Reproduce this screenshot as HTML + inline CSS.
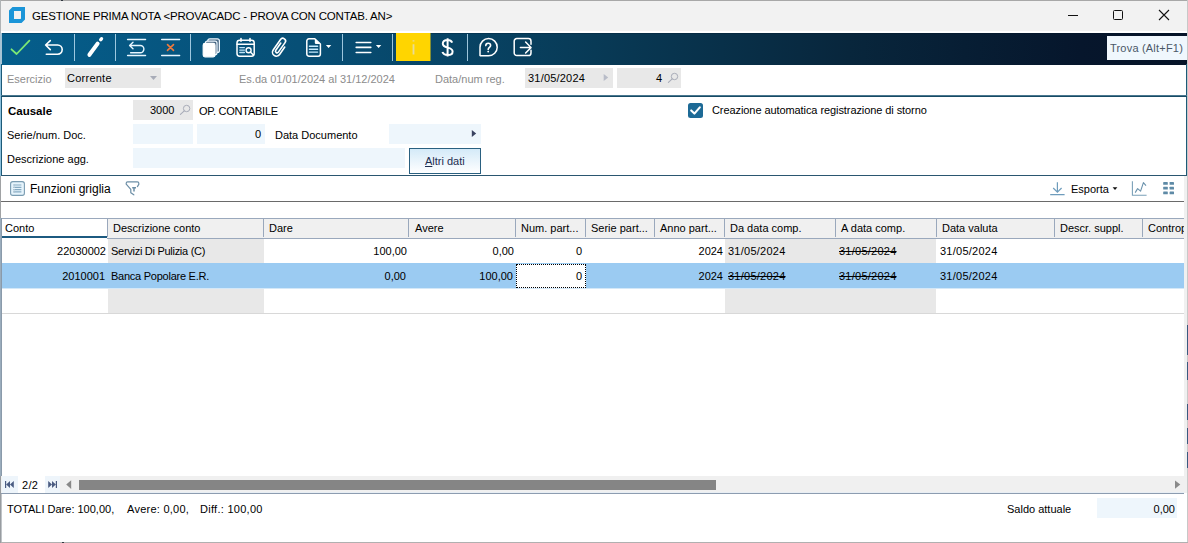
<!DOCTYPE html>
<html><head><meta charset="utf-8">
<style>
*{margin:0;padding:0;box-sizing:border-box}
html,body{width:1188px;height:543px;overflow:hidden;background:#fff}
body{position:relative;font-family:"Liberation Sans",sans-serif;font-size:11px;color:#000}
.a{position:absolute}
.t{position:absolute;white-space:nowrap;line-height:13px}
.r{text-align:right}
svg{position:absolute;overflow:visible;z-index:2}
</style></head><body>

<!-- window frame -->
<div class="a" style="left:0;top:0;width:1188px;height:543px;background:#fff"></div>
<!-- title bar -->
<div class="a" style="left:0;top:0;width:1188px;height:31px;background:#f2f2f2"></div>
<div class="a" style="left:0;top:0;width:1188px;height:1px;background:#a8a8a8"></div>
<div class="a" style="left:0;top:0;width:1px;height:543px;background:#b0b4b6"></div>
<div class="a" style="left:0;top:176px;width:1px;height:42px;background:#a0a2a4"></div>
<div class="a" style="z-index:3;left:0;top:218px;width:1px;height:258px;background:#9aacbc"></div>
<div class="a" style="z-index:3;left:1px;top:218px;width:1px;height:258px;background:#8a9aaa"></div>
<div class="a" style="z-index:3;left:0;top:476px;width:1px;height:67px;background:#989ca0"></div>
<div class="a" style="z-index:3;left:1px;top:494px;width:1px;height:48px;background:#c0c4c8"></div>
<div class="a" style="left:0;top:33px;width:2px;height:31px;background:#a8c4d4"></div>
<div class="a" style="left:1187px;top:0;width:1px;height:543px;background:#c8c8c8"></div>
<div class="a" style="left:1187px;top:325px;width:1px;height:30px;background:#3a5a80"></div>
<div class="a" style="left:1187px;top:362px;width:1px;height:18px;background:#3a5a80"></div>
<div class="a" style="left:1187px;top:404px;width:1px;height:16px;background:#3a5a80"></div>
<div class="a" style="left:1187px;top:428px;width:1px;height:16px;background:#3a5a80"></div>
<div class="a" style="left:1187px;top:452px;width:1px;height:16px;background:#3a5a80"></div>
<div class="a" style="left:0;top:542px;width:1188px;height:1px;background:#b0b0b0"></div>

<!-- logo -->
<svg style="left:0;top:0" width="40" height="32"><path d="M12.5 7 H25 V19.5 L21.5 23 H9 V10.5 Z M14 11 V19 H20.5 L21 18.5 V11 Z" fill="#1b95d8" fill-rule="evenodd"/></svg>
<div class="t" style="left:32px;top:10px;font-size:11.5px;letter-spacing:-0.19px;color:#000">GESTIONE PRIMA NOTA &lt;PROVACADC - PROVA CON CONTAB. AN&gt;</div>
<!-- window controls -->
<div class="a" style="left:1068px;top:15px;width:10px;height:1px;background:#111"></div>
<div class="a" style="left:1113px;top:10px;width:10px;height:10px;border:1px solid #111;border-radius:1.5px"></div>
<svg style="left:1158px;top:9px" width="12" height="12"><path d="M1 1 L11 11 M11 1 L1 11" stroke="#111" stroke-width="1.1"/></svg>

<!-- toolbar -->
<div class="a" style="left:2px;top:33px;width:1185px;height:32px;background:linear-gradient(90deg,#055e8c 0%,#074f76 25%,#083a56 50%,#08263c 71.5%,#06162c 91%,#061428 100%)"></div>
<div class="a" style="left:2px;top:33px;width:1185px;height:1px;background:rgba(0,20,40,0.25)"></div>


<!-- toolbar icons -->
<svg style="left:0;top:0" width="600" height="70">
 <g fill="none" stroke-linecap="round" stroke-linejoin="round">
  <path d="M11.5 49.3 L16.6 54 L29.4 40.6" stroke="#7ce874" stroke-width="1.8"/>
  <path d="M50.3 40.6 L45.6 45 L50.3 49.6 M45.8 45 H57.6 A4.6 4.6 0 0 1 57.6 54.2 H46.3" stroke="#fff" stroke-width="1.6"/>
  <path d="M89.4 54.8 L97.6 43.6" stroke="#fff" stroke-width="4"/>
  <path d="M100.7 39.7 L101.5 38.7" stroke="#fff" stroke-width="3.4"/>
  <path d="M127.6 39.4 H145.5 M127.6 55.4 H145.5" stroke="#e8f6ff" stroke-width="1.5"/>
  <path d="M133 42.3 L129.6 45.5 L133 48.8 M129.8 45.5 H140.3 A3.6 3.6 0 0 1 140.3 52.7 H130.6" stroke="#e8f6ff" stroke-width="1.4"/>
  <path d="M161.7 39.4 H179.6 M161.7 55.4 H179.6" stroke="#e8f6ff" stroke-width="1.5"/>
  <path d="M167.5 44.6 L173.5 50.4 M173.5 44.6 L167.5 50.4" stroke="#f07a3c" stroke-width="1.6"/>
 </g>
 <g stroke-width="1.2">
  <rect x="207.8" y="38.8" width="11.6" height="13.6" rx="2" fill="#4a6884" stroke="#eef8ff"/>
  <rect x="205.4" y="41.2" width="11.6" height="13.6" rx="2" fill="#4a6884" stroke="#eef8ff"/>
  <rect x="203.2" y="43.4" width="11.8" height="13.4" rx="1.8" fill="#fff" stroke="#fff"/>
 </g>
 <g fill="none" stroke="#fff" stroke-linecap="round" stroke-linejoin="round">
  <rect x="237" y="40.2" width="17.2" height="16" rx="2.6" stroke-width="1.5"/>
  <path d="M237 44.3 H254" stroke-width="1.5"/>
  <path d="M241 38.6 V41.2 M250 38.6 V41.2" stroke-width="1.6"/>
  <path d="M239.8 47.6 H244.4 M239.8 50.1 H244.4 M239.8 52.5 H244.4" stroke="#bfe4f8" stroke-width="1.3"/>
  <circle cx="248.6" cy="50.3" r="2.5" stroke-width="1.4"/>
  <path d="M250.6 52.3 L253.4 55" stroke-width="1.5"/>
  <path transform="translate(279.6 47.6) rotate(35)" d="M3.9 -3.4 V5.6 A3.9 3.9 0 0 1 -3.9 5.6 V-7.2 A2.75 2.75 0 0 1 1.6 -7.2 V4.4 A1.6 1.6 0 0 1 -1.6 4.4 V-4.4" stroke-width="1.6"/>
  <path d="M314.8 38.8 H309 A2.2 2.2 0 0 0 306.8 41 V54 A2.2 2.2 0 0 0 309 56.2 H318.2 A2.2 2.2 0 0 0 320.4 54 V44 Z" stroke-width="1.5"/>
  <path d="M309.4 46.2 H317.6 M309.4 49.2 H317.6 M309.4 52.1 H317.6" stroke="#c8ecff" stroke-width="1.4"/>
  <path d="M356.2 42.5 H370.8 M356.2 47.4 H370.8 M356.2 52.5 H370.8" stroke-width="1.6"/>
  <path d="M480 55.4 V47.2 A8.6 8.6 0 1 1 488.6 55.8 H480.4 Z" stroke-width="1.5"/>
  <path d="M531 44.2 V41.2 A2.6 2.6 0 0 0 528.4 38.6 H516.8 A2.6 2.6 0 0 0 514.2 41.2 V53 A2.6 2.6 0 0 0 516.8 55.6 H528.4 A2.6 2.6 0 0 0 531 53 V50.3" stroke-width="1.5"/>
  <path d="M520.4 47.6 H530.6 M525.6 42 L531 47.6 L525.6 53" stroke-width="1.5"/>
 </g>
 <path d="M314.8 38.8 L320.4 44 H316 A1.2 1.2 0 0 1 314.8 42.8 Z" fill="#fff"/>
 <path d="M325.9 45 H331.3 L328.6 48.1 Z M375.9 45 H381.3 L378.6 48.1 Z" fill="#fff"/>
 <g stroke="#b8dcf0" stroke-width="1" opacity="0.85">
  <path d="M74.5 34 V61 M115.5 34 V61 M190.5 34 V61 M342.5 34 V61 M392.5 34 V61 M467.5 34 V61"/>
 </g>
 <rect x="396" y="33" width="34.5" height="28" fill="#ffd500"/>
 <path d="M413.5 40.2 V41.6 M413.5 44.2 V54.6" stroke="#e8dc98" stroke-width="1.8"/>
 <path d="M447.6 38.2 V56.6 M452.2 42.6 C451.4 40.8 449.6 40 447.6 40 C444.6 40 442.8 41.6 442.8 43.8 C442.8 49 452.6 46.2 452.6 51.4 C452.6 53.6 450.6 55 447.6 55 C445 55 443.2 54 442.4 52" fill="none" stroke="#fff" stroke-width="2"/>
 <path d="M485.8 45.6 C485.8 44 487 43.2 488.2 43.2 C489.6 43.2 490.6 44.1 490.6 45.4 C490.6 47.2 488.2 47.4 488.2 49.4" fill="none" stroke="#fff" stroke-width="1.6" stroke-linecap="round"/><circle cx="488.2" cy="51.6" r="0.95" fill="#fff"/>
</svg>
<div class="a" style="left:1107px;top:36px;width:80px;height:24px;background:#f0f7fd"></div>
<div class="t" style="left:1110px;top:42px;color:#4a5868;letter-spacing:0.2px">Trova (Alt+F1)</div>

<!-- form row 1 -->
<div class="a" style="left:0;top:64px;width:1px;height:112px;background:#8cc0dc"></div>
<div class="a" style="left:1px;top:64px;width:1px;height:112px;background:#1d5a78"></div>
<div class="a" style="left:1186px;top:64px;width:1px;height:112px;background:#1d5a78"></div>
<div class="a" style="left:1px;top:95px;width:1186px;height:1px;background:#4a7890"></div><div class="a" style="left:1px;top:96px;width:1186px;height:1px;background:#174a64"></div>
<div class="a" style="left:1px;top:175px;width:1186px;height:1px;background:#2a5670"></div>

<div class="t" style="left:7px;top:73px;color:#8c8c8c">Esercizio</div>
<div class="a" style="left:65px;top:68px;width:96px;height:20px;background:#e8e8e8"></div>
<div class="t" style="left:67px;top:72px;letter-spacing:0.25px">Corrente</div>
<svg style="left:0;top:0" width="1" height="1"><path d="M150 75.9 H157 L153.5 79.9 Z" fill="#a8acb8"/><path d="M603.7 73.9 L608.2 77.4 L603.7 80.9 Z" fill="#b8bcc8"/>
<circle cx="674.5" cy="76.5" r="3.2" fill="none" stroke="#a8acb8" stroke-width="1"/><path d="M672.2 78.9 L668.4 82.4" stroke="#a8acb8" stroke-width="1.1" stroke-linecap="round"/>
<circle cx="186.6" cy="108.5" r="3.2" fill="none" stroke="#a8acb8" stroke-width="1"/><path d="M184.3 110.9 L180.4 114.4" stroke="#a8acb8" stroke-width="1.1" stroke-linecap="round"/>
<path d="M471.8 130 L476.2 133.5 L471.8 137 Z" fill="#3a4260"/>
<path d="M691.2 110.4 L694.4 113.6 L699.8 107.4" fill="none" stroke="#fff" stroke-width="2.1" stroke-linecap="round" stroke-linejoin="round"/>
</svg>
<div class="t" style="left:239px;top:73px;color:#8c8c8c">Es.da 01/01/2024 al 31/12/2024</div>
<div class="t" style="left:435px;top:73px;color:#8c8c8c">Data/num reg.</div>
<div class="a" style="left:525px;top:68px;width:88px;height:20px;background:#e8e8e8"></div>
<div class="t" style="left:528px;top:72px;letter-spacing:0.2px">31/05/2024</div>

<div class="a" style="left:617px;top:68px;width:64px;height:20px;background:#e8e8e8"></div>
<div class="t" style="left:656px;top:72px">4</div>

<!-- causale section -->
<div class="t" style="left:8px;top:105px;font-weight:bold;font-size:11.5px">Causale</div>
<div class="a" style="left:133px;top:100px;width:60px;height:20px;background:#e8e8e8"></div>
<div class="t" style="left:150px;top:104px">3000</div>
<div class="t" style="left:199px;top:105px;letter-spacing:-0.25px">OP. CONTABILE</div>
<div class="t" style="left:7px;top:129px">Serie/num. Doc.</div>
<div class="a" style="left:133px;top:124px;width:60px;height:20px;background:#eef6fc"></div>
<div class="a" style="left:197px;top:124px;width:68px;height:20px;background:#eef6fc"></div>
<div class="t" style="left:255px;top:128px">0</div>
<div class="t" style="left:275px;top:129px">Data Documento</div>
<div class="a" style="left:389px;top:124px;width:92px;height:20px;background:#eef6fc"></div>
<div class="t" style="left:7px;top:153px">Descrizione agg.</div>
<div class="a" style="left:133px;top:148px;width:272px;height:20px;background:#eef6fc"></div>
<div class="a" style="left:409px;top:148px;width:72px;height:26px;border:1px solid #2a6080;background:linear-gradient(#d4eaf8,#ffffff)"></div>
<div class="t" style="left:425px;top:155px;color:#1e2e50"><u>A</u>ltri dati</div>

<div class="a" style="left:688px;top:103px;width:15px;height:15px;border-radius:2.5px;background:#1d6a96"></div>
<div class="t" style="left:712px;top:104px;letter-spacing:-0.08px">Creazione automatica registrazione di storno</div>

<!-- grid toolbar -->
<svg style="left:0;top:0" width="1" height="1">
 <rect x="10.6" y="181.6" width="13.8" height="13.8" rx="2.2" fill="#e6f4fc" stroke="#7a9cb2" stroke-width="1.1"/>
 <path d="M13.4 185 H21.4 M13.4 187.4 H21.4 M13.4 189.6 H21.4 M13.4 191.9 H21.4" stroke="#86aac2" stroke-width="1.2"/>
 <path d="M13.4 185 H15 M13.4 187.4 H15 M13.4 189.6 H15 M13.4 191.9 H15" stroke="#b0c4d2" stroke-width="1.2"/>
 <path d="M137.4 186.6 L138.8 184.4 V183.2 A1.4 1.4 0 0 0 137.4 181.8 H127.6 A1.4 1.4 0 0 0 126.2 183.2 V184.2 L130.8 189.4 V192.8 L133.8 194.8" fill="none" stroke="#6c8ea6" stroke-width="1.2" stroke-linecap="round" stroke-linejoin="round"/>
 <path d="M132.2 187.8 H136 M134 187.8 V191.6" stroke="#6c8ea6" stroke-width="1.5"/>
 <path d="M1057.4 182.2 V192.2 M1053.2 188 L1057.4 192.2 L1061.6 188 M1050.2 194.6 H1064.6" fill="none" stroke="#6e9cbc" stroke-width="1.2"/>
 <path d="M1112.6 187.2 H1117.4 L1115 190 Z" fill="#111"/>
 <path d="M1132.4 181.2 V195.3 H1146.6" fill="none" stroke="#7aa0b8" stroke-width="1.1"/>
 <path d="M1135.2 192.6 L1137.6 188.6 L1140.6 191.2 L1143.4 182.6 L1146 185.6" fill="none" stroke="#6a92ac" stroke-width="1.1" stroke-linejoin="round"/>
 <g fill="#5e8aa6"><rect x="1163.2" y="182" width="4.6" height="2.8" rx="0.4"/><rect x="1169.6" y="182" width="4.4" height="2.8" rx="0.4"/><rect x="1163.2" y="186.8" width="4.6" height="2.8" rx="0.4"/><rect x="1169.6" y="186.8" width="4.4" height="2.8" rx="0.4"/><rect x="1163.2" y="191.5" width="4.6" height="2.8" rx="0.4"/><rect x="1169.6" y="191.5" width="4.4" height="2.8" rx="0.4"/></g>
</svg>

<div class="t" style="left:30px;top:183px;font-size:12px">Funzioni griglia</div>
<div class="t" style="left:1071px;top:183px">Esporta</div>
<div class="a" style="left:1px;top:201px;width:1183px;height:1px;background:#6a6a6a"></div>

<!-- grid -->
<div class="a" style="left:1184px;top:176px;width:3px;height:317px;background:#f0f0f0"></div>
<div class="a" style="left:1px;top:218px;width:1183px;height:1px;background:#9aa8bc"></div>
<div class="a" style="left:1px;top:219px;width:1183px;height:19px;background:#f0f0f0"></div>
<div class="a" style="left:1px;top:219px;width:106px;height:19px;background:#fff"></div>
<div class="a" style="left:107px;top:238px;width:1077px;height:1px;background:#9aa8bc"></div>
<div class="a" style="left:1px;top:236px;width:106px;height:2px;background:#1c5a80"></div>


<!-- grid header texts -->
<div class="t" style="left:5px;top:222px">Conto</div>
<div class="a" style="left:107px;top:219px;width:1px;height:18px;background:#9aa8bc"></div>
<div class="t" style="left:113px;top:222px">Descrizione conto</div>
<div class="a" style="left:263px;top:219px;width:1px;height:18px;background:#9aa8bc"></div>
<div class="t" style="left:269px;top:222px">Dare</div>
<div class="a" style="left:408px;top:219px;width:1px;height:18px;background:#9aa8bc"></div>
<div class="t" style="left:415px;top:222px">Avere</div>
<div class="a" style="left:515px;top:219px;width:1px;height:18px;background:#9aa8bc"></div>
<div class="t" style="left:521px;top:222px">Num. part...</div>
<div class="a" style="left:585px;top:219px;width:1px;height:18px;background:#9aa8bc"></div>
<div class="t" style="left:591px;top:222px">Serie part...</div>
<div class="a" style="left:654px;top:219px;width:1px;height:18px;background:#9aa8bc"></div>
<div class="t" style="left:660px;top:222px">Anno part...</div>
<div class="a" style="left:724px;top:219px;width:1px;height:18px;background:#9aa8bc"></div>
<div class="t" style="left:730px;top:222px">Da data comp.</div>
<div class="a" style="left:835px;top:219px;width:1px;height:18px;background:#9aa8bc"></div>
<div class="t" style="left:841px;top:222px">A data comp.</div>
<div class="a" style="left:936px;top:219px;width:1px;height:18px;background:#9aa8bc"></div>
<div class="t" style="left:942px;top:222px">Data valuta</div>
<div class="a" style="left:1054px;top:219px;width:1px;height:18px;background:#9aa8bc"></div>
<div class="t" style="left:1060px;top:222px">Descr. suppl.</div>
<div class="a" style="left:1142px;top:219px;width:1px;height:18px;background:#9aa8bc"></div>
<div class="a" style="left:1148px;top:219px;width:36px;height:18px;overflow:hidden"><div class="t" style="left:0;top:3px">Contropartita</div></div>

<!-- rows backgrounds -->
<div class="a" style="left:108px;top:239px;width:156px;height:24px;background:#e8e8e8"></div>
<div class="a" style="left:725px;top:239px;width:211px;height:24px;background:#e8e8e8"></div>
<div class="a" style="left:1px;top:263px;width:1183px;height:25px;background:#9bcbf2"></div>
<div class="a" style="left:516px;top:264px;width:70px;height:24px;background:#fff;border:1px dotted #000"></div>
<div class="a" style="left:1px;top:288px;width:1183px;height:1px;background:#d4e8f8"></div>
<div class="a" style="left:108px;top:289px;width:156px;height:24px;background:#e8e8e8"></div>
<div class="a" style="left:725px;top:289px;width:211px;height:24px;background:#e8e8e8"></div>
<div class="a" style="left:1px;top:313px;width:1183px;height:1px;background:#d8d8d8"></div>

<!-- row 1 -->
<div class="t r" style="left:1px;width:105px;top:245px">22030002</div>
<div class="t" style="left:111px;top:245px;letter-spacing:-0.28px">Servizi Di Pulizia (C)</div>
<div class="t r" style="left:264px;width:143px;top:245px">100,00</div>
<div class="t r" style="left:409px;width:105px;top:245px">0,00</div>
<div class="t r" style="left:516px;width:66px;top:245px">0</div>
<div class="t r" style="left:655px;width:68px;top:245px">2024</div>
<div class="t" style="left:728px;top:245px;letter-spacing:0.25px">31/05/2024</div>
<div class="t" style="left:839px;top:245px;text-decoration:line-through;letter-spacing:0.25px">31/05/2024</div>
<div class="t" style="left:940px;top:245px;letter-spacing:0.25px">31/05/2024</div>
<!-- row 2 -->
<div class="t r" style="left:1px;width:104px;top:270px">2010001</div>
<div class="t" style="left:111px;top:270px;letter-spacing:-0.25px">Banca Popolare E.R.</div>
<div class="t r" style="left:264px;width:142px;top:270px">0,00</div>
<div class="t r" style="left:409px;width:104px;top:270px">100,00</div>
<div class="t r" style="left:516px;width:66px;top:270px">0</div>
<div class="t r" style="left:655px;width:68px;top:270px">2024</div>
<div class="t" style="left:728px;top:270px;text-decoration:line-through;letter-spacing:0.25px">31/05/2024</div>
<div class="t" style="left:839px;top:270px;text-decoration:line-through;letter-spacing:0.25px">31/05/2024</div>
<div class="t" style="left:940px;top:270px;letter-spacing:0.25px">31/05/2024</div>

<!-- pager / scrollbar -->
<div class="a" style="left:1px;top:476px;width:1183px;height:17px;background:#f0f0f0"></div>
<div class="a" style="left:2px;top:476px;width:16px;height:17px;background:#eef5fb"></div>
<div class="a" style="left:18px;top:476px;width:27px;height:17px;background:#fff"></div>
<div class="a" style="left:45px;top:476px;width:15px;height:17px;background:#eef5fb"></div>
<div class="t" style="left:22px;top:479px;letter-spacing:0.3px">2/2</div>
<svg style="left:0;top:470px" width="70" height="30">
 <path d="M5 11 H6.2 V18 H5 Z M6.2 14.5 L10 11 V18 Z M10 14.5 L13.8 11 V18 Z" fill="#4a5c82"/>
 <path d="M57 11 H55.8 V18 H57 Z M55.8 14.5 L52 11 V18 Z M52 14.5 L48.2 11 V18 Z" fill="#4a5c82"/>
 <path d="M71.2 10.2 L66.2 14.6 L71.2 19 Z" fill="#888"/>
</svg>
<div class="a" style="left:79px;top:480px;width:637px;height:10px;background:#858585"></div>
<svg style="left:1170px;top:470px" width="14" height="30"><path d="M5 10.5 L10.3 14.6 L5 18.7 Z" fill="#8a8a8a"/></svg>
<div class="a" style="left:60px;top:492px;width:1124px;height:1px;background:#e8eef4"></div>
<div class="a" style="left:1px;top:493px;width:1183px;height:1px;background:#8c9cb0"></div>

<!-- totals -->
<div class="t" style="left:7px;top:503px">TOTALI Dare: 100,00,</div>
<div class="t" style="left:127px;top:503px;letter-spacing:0.25px">Avere: 0,00,</div>
<div class="t" style="left:200px;top:503px;letter-spacing:0.28px">Diff.: 100,00</div>
<div class="t" style="left:1007px;top:503px">Saldo attuale</div>
<div class="a" style="left:1097px;top:498px;width:80px;height:20px;background:#eef6fc"></div>
<div class="t r" style="left:1097px;width:78px;top:503px">0,00</div>

<div class="a" style="z-index:3;left:61px;top:0;width:2px;height:1px;background:#303840"></div>
<div class="a" style="z-index:3;left:62px;top:542px;width:2px;height:1px;background:#303840"></div>
</body></html>
